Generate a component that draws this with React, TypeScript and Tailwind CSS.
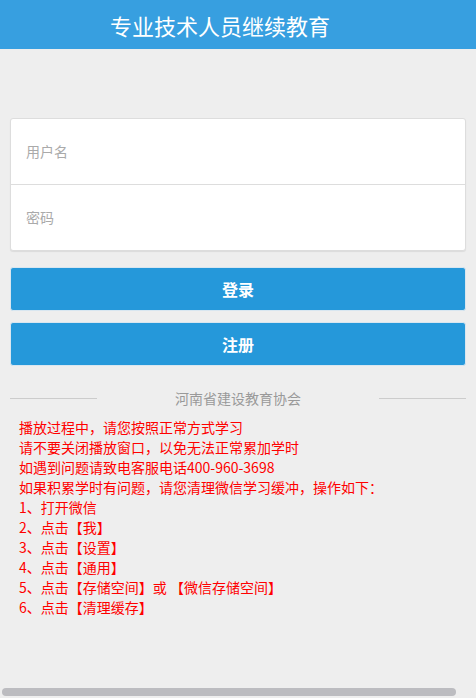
const font = {
  fontFamily: '"Noto Sans CJK SC", "Liberation Sans", sans-serif',
};

const notes = [
  "播放过程中，请您按照正常方式学习",
  "请不要关闭播放窗口，以免无法正常累加学时",
  "如遇到问题请致电客服电话400-960-3698",
  "如果积累学时有问题，请您清理微信学习缓冲，操作如下：",
  "1、打开微信",
  "2、点击【我】",
  "3、点击【设置】",
  "4、点击【通用】",
  "5、点击【存储空间】或 【微信存储空间】",
  "6、点击【清理缓存】",
];

export default function App() {
  return (
    <div className="relative min-h-[698px] w-[476px] overflow-hidden bg-[#eeeeee]" style={font}>
      <header className="flex h-[49px] items-center bg-[#379fe0] pl-[110px]">
        <h1 className="text-[22px] leading-none text-white">专业技术人员继续教育</h1>
      </header>

      <div className="px-[10px] pt-[69px]">
        <div className="overflow-hidden rounded-[3px] border border-[#dddddd] bg-white shadow-[0_1px_1px_rgba(0,0,0,0.08)]">
          <div className="flex h-[66px] items-center border-b border-[#dddddd] pl-[15px] text-[14px] text-[#aaaaaa]">
            用户名
          </div>
          <div className="flex h-[65px] items-center pl-[15px] text-[14px] text-[#aaaaaa]">
            密码
          </div>
        </div>

        <button className="mt-[16px] flex h-[44px] w-full items-center justify-center rounded-[3px] border border-[#d8e6f0] bg-[#2598da] text-[16px] font-bold text-white">
          登录
        </button>
        <button className="mt-[11px] flex h-[44px] w-full items-center justify-center rounded-[3px] border border-[#d8e6f0] bg-[#2598da] text-[16px] font-bold text-white">
          注册
        </button>

        <div className="mt-[22px] flex items-center">
          <div className="h-px w-[87px] bg-[#cccccc]" />
          <div className="flex-1 text-center text-[14px] leading-[20px] text-[#999999]">河南省建设教育协会</div>
          <div className="h-px w-[87px] bg-[#cccccc]" />
        </div>

        <div className="mt-[9px] pl-[9px] text-[14px] leading-[20px] text-[#ff0000]">
          {notes.map((n) => (
            <p key={n}>{n}</p>
          ))}
        </div>
      </div>

      <div className="absolute bottom-[2px] left-[2px] h-[8px] w-[454px] rounded-full bg-[#bcbcc0]" />
    </div>
  );
}
